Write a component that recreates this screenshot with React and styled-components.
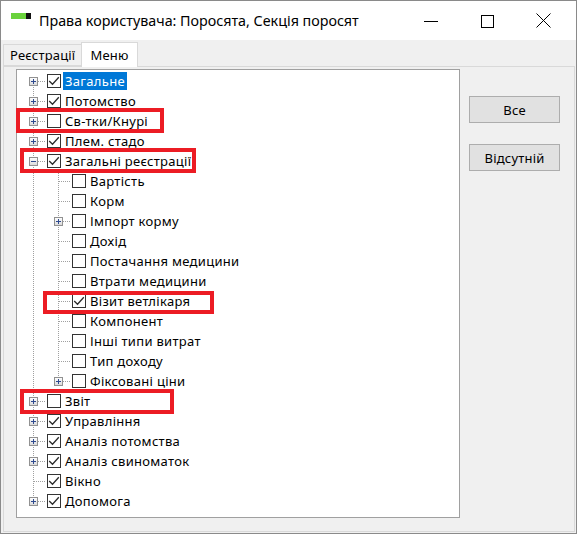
import React from "react";
import styled, { createGlobalStyle } from "styled-components";

const GlobalStyle = createGlobalStyle`
  html, body {
    margin: 0;
    padding: 0;
    background: #ffffff;
  }
  body {
    font-family: "Noto Sans", "Liberation Sans", sans-serif;
  }
`;

const leaf = (t, c = false, exp = null) => ({ t, c, exp });

const tree = [
  { ...leaf("Загальне", true, "+"), sel: true },
  leaf("Потомство", true, "+"),
  leaf("Св-тки/Кнурі", false, "+"),
  leaf("Плем. стадо", true, "+"),
  {
    ...leaf("Загальні реєстрації", true, "-"),
    children: [
      leaf("Вартість"),
      leaf("Корм"),
      leaf("Імпорт корму", false, "+"),
      leaf("Дохід"),
      leaf("Постачання медицини"),
      leaf("Втрати медицини"),
      leaf("Візит ветлікаря", true),
      leaf("Компонент"),
      leaf("Інші типи витрат"),
      leaf("Тип доходу"),
      leaf("Фіксовані ціни", false, "+"),
    ],
  },
  leaf("Звіт", false, "+"),
  leaf("Управління", true, "+"),
  leaf("Аналіз потомства", true, "+"),
  leaf("Аналіз свиноматок", true, "+"),
  leaf("Вікно", true),
  leaf("Допомога", true, "+"),
];

// flatten the tree into rows that know which guide lines to draw
const flatten = (nodes, guides = [], level = 0, out = []) => {
  nodes.forEach((n, i) => {
    const last = i === nodes.length - 1;
    out.push({
      ...n,
      guides,
      top: !(level === 0 && i === 0),
      bottom: !last,
      key: `${level}-${i}-${n.t}`,
    });
    if (n.children && n.exp === "-") {
      flatten(n.children, [...guides, !last], level + 1, out);
    }
  });
  return out;
};

const rows = flatten(tree);

const marks = [
  { x: 15, y: 107, w: 148, h: 25 },
  { x: 19, y: 147, w: 176, h: 25 },
  { x: 42, y: 290, w: 171, h: 23 },
  { x: 19, y: 388, w: 154, h: 25 },
];

const Guide = ({ on }) => (
  <Cell width="25" height="20">
    {on && (
      <line x1="12.5" y1="0" x2="12.5" y2="20" stroke="#a0a0a0" strokeDasharray="1 1" />
    )}
  </Cell>
);

const Joint = ({ top, bottom, exp }) => (
  <Cell width="25" height="20">
    {top && <line x1="12.5" y1="0" x2="12.5" y2="10" stroke="#a0a0a0" strokeDasharray="1 1" />}
    {bottom && <line x1="12.5" y1="10" x2="12.5" y2="20" stroke="#a0a0a0" strokeDasharray="1 1" />}
    <line x1="13" y1="10.5" x2="25" y2="10.5" stroke="#a0a0a0" strokeDasharray="1 1" />
    {exp && (
      <>
        <defs>
          <linearGradient id="expfill" x1="0" y1="0" x2="0" y2="1">
            <stop offset="0" stopColor="#ffffff" />
            <stop offset="1" stopColor="#d8d8d8" />
          </linearGradient>
        </defs>
        <rect x="8.5" y="6.5" width="8" height="8" fill="url(#expfill)" stroke="#919191" />
        <line x1="10" y1="10.5" x2="15" y2="10.5" stroke="#2f4a8f" />
        {exp === "+" && <line x1="12.5" y1="8" x2="12.5" y2="13" stroke="#2f4a8f" />}
      </>
    )}
  </Cell>
);

const CheckBox = ({ on }) => (
  <Check>
    {on && (
      <svg width="12" height="12" viewBox="0 0 12 12">
        <path d="M1.2 6 L4.5 9.3 L10.8 2.3" fill="none" stroke="#2b2b2b" strokeWidth="1.3" />
      </svg>
    )}
  </Check>
);

export default function App() {
  return (
    <>
      <GlobalStyle />
      <Window>
        <TitleBar>
          <AppIcon>
            <span />
          </AppIcon>
          <Title>Права користувача: Поросята, Секція поросят</Title>
          <Controls>
            <CtrlBtn>
              <svg width="14" height="14" viewBox="0 0 14 14">
                <line x1="0" y1="7.5" x2="14" y2="7.5" stroke="#000" />
              </svg>
            </CtrlBtn>
            <CtrlBtn>
              <svg width="14" height="14" viewBox="0 0 14 14">
                <rect x="1.5" y="1.5" width="12" height="12" fill="none" stroke="#000" />
              </svg>
            </CtrlBtn>
            <CtrlBtn>
              <svg width="15" height="15" viewBox="0 0 15 15">
                <path d="M0.5 0.5 L14.5 14.5 M14.5 0.5 L0.5 14.5" stroke="#000" />
              </svg>
            </CtrlBtn>
          </Controls>
        </TitleBar>
        <Body>
          <Tabs>
            <Tab>Реєстрації</Tab>
            <Tab $active>Меню</Tab>
          </Tabs>
          <Panel>
            <TreeBox>
              {rows.map((r) => (
                <Row key={r.key}>
                  {r.guides.map((g, i) => (
                    <Guide key={i} on={g} />
                  ))}
                  <Joint top={r.top} bottom={r.bottom} exp={r.exp} />
                  <CheckBox on={r.c} />
                  <Label $sel={r.sel}>{r.t}</Label>
                </Row>
              ))}
            </TreeBox>
            <Side>
              <Button>Все</Button>
              <Button>Відсутній</Button>
            </Side>
          </Panel>
        </Body>
        {marks.map((m, i) => (
          <Mark
            key={i}
            style={{ left: m.x, top: m.y, width: m.w, height: m.h }}
          />
        ))}
      </Window>
    </>
  );
}

const Window = styled.div`
  position: relative;
  width: 577px;
  height: 534px;
  box-sizing: border-box;
  border: 1px solid #8a8a8a;
  background: #f0f0f0;
  display: flex;
  flex-direction: column;
`;

const TitleBar = styled.div`
  height: 39px;
  background: #ffffff;
  display: flex;
  align-items: center;
  flex-shrink: 0;
`;

const AppIcon = styled.div`
  width: 20px;
  height: 6px;
  margin-left: 10px;
  margin-right: 8px;
  margin-top: -9px;
  background: #6ad23c;
  display: flex;
  justify-content: flex-end;
  span {
    width: 5px;
    height: 6px;
    background: #111;
  }
`;

const Title = styled.div`
  font-size: 14.3px;
  color: #000;
  flex: 1;
`;

const Controls = styled.div`
  display: flex;
  height: 100%;
`;

const CtrlBtn = styled.div`
  width: 46px;
  height: 100%;
  margin-left: 10px;
  display: flex;
  align-items: center;
  justify-content: center;
  &:last-child {
    margin-right: 10px;
  }
`;

const Body = styled.div`
  flex: 1;
  display: flex;
  flex-direction: column;
  padding: 2px 1px 1px 2px;
  min-height: 0;
`;

const Tabs = styled.div`
  display: flex;
  align-items: flex-end;
  height: 24px;
  flex-shrink: 0;
`;

const Tab = styled.div`
  box-sizing: border-box;
  height: ${(p) => (p.$active ? "25px" : "22px")};
  margin-bottom: ${(p) => (p.$active ? "-1px" : "0")};
  padding: 0 ${(p) => (p.$active ? "8px" : "6px")};
  border: 1px solid #d9d9d9;
  border-bottom: ${(p) => (p.$active ? "none" : "1px solid #d9d9d9")};
  margin-left: ${(p) => (p.$active ? "-1px" : "0")};
  background: ${(p) => (p.$active ? "#ffffff" : "#f0f0f0")};
  position: relative;
  z-index: ${(p) => (p.$active ? 1 : 0)};
  font-size: 13px;
  letter-spacing: 0.2px;
  color: #000;
  display: flex;
  align-items: center;
`;

const Panel = styled.div`
  flex: 1;
  box-sizing: border-box;
  border: 1px solid #d9d9d9;
  background: #f0f0f0;
  display: flex;
  align-items: flex-start;
  padding: 2px 0 0 12px;
`;

const TreeBox = styled.div`
  box-sizing: border-box;
  width: 444px;
  height: 449px;
  border: 1px solid #a0a0a0;
  background: #ffffff;
  padding: 1px 0 0 4px;
  overflow: hidden;
`;

const Row = styled.div`
  display: flex;
  align-items: center;
  height: 20px;
`;

const Cell = styled.svg`
  display: block;
  flex-shrink: 0;
`;

const Check = styled.div`
  box-sizing: border-box;
  width: 14px;
  height: 14px;
  margin-left: 1px;
  border: 1px solid #333333;
  background: #ffffff;
  display: flex;
  align-items: center;
  justify-content: center;
  flex-shrink: 0;
`;

const Label = styled.div`
  margin-left: 2px;
  padding: 0 2px;
  height: 18px;
  line-height: 18px;
  font-size: 13px;
  letter-spacing: 0.3px;
  white-space: nowrap;
  color: ${(p) => (p.$sel ? "#ffffff" : "#000000")};
  background: ${(p) => (p.$sel ? "#0078d7" : "transparent")};
`;

const Side = styled.div`
  display: flex;
  flex-direction: column;
  gap: 21px;
  margin-left: 9px;
  padding-top: 27px;
`;

const Button = styled.div`
  box-sizing: border-box;
  width: 91px;
  height: 27px;
  border: 1px solid #adadad;
  background: #e1e1e1;
  font-size: 13px;
  letter-spacing: 0.2px;
  color: #000;
  display: flex;
  align-items: center;
  justify-content: center;
`;

const Mark = styled.div`
  position: absolute;
  box-sizing: border-box;
  border: 4px solid #ec1c24;
  pointer-events: none;
`;
